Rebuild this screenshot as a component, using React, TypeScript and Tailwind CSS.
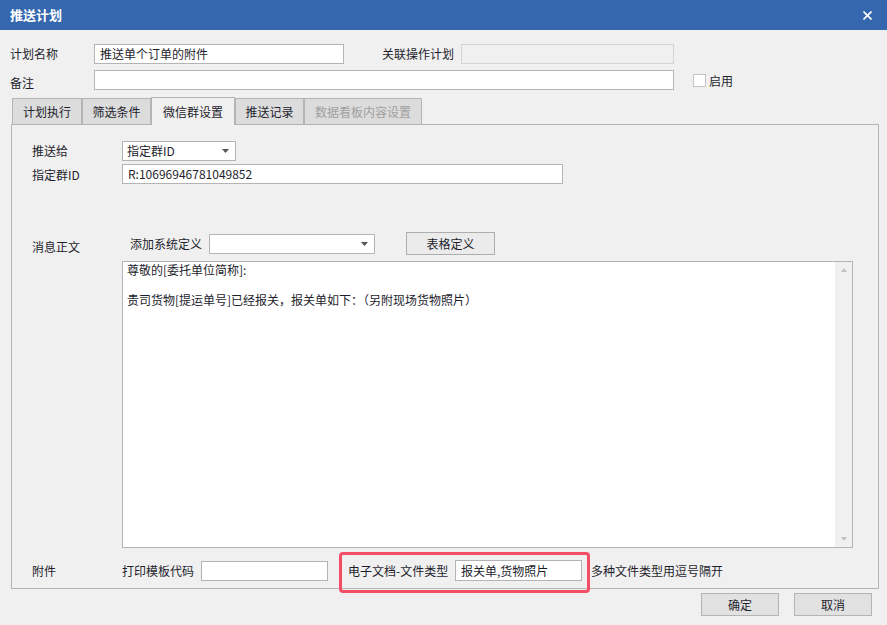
import React, { useState } from "react";

const font = "font-['Microsoft_YaHei','Noto_Sans_CJK_SC',sans-serif]";

function Arrow() {
  return (
    <svg width="7" height="4" viewBox="0 0 7 4">
      <path d="M0 0h7L3.5 4z" fill="#555" />
    </svg>
  );
}

function Select({ value, w }: { value: string; w: string }) {
  return (
    <div className={`flex h-[20px] items-center justify-between border border-[#b4b4b4] bg-white pl-[4px] pr-[6px] ${w}`}>
      <span className="leading-[18px]">{value}</span>
      <Arrow />
    </div>
  );
}

function Input({ value, w, h = "h-[20px]", disabled }: { value?: string; w: string; h?: string; disabled?: boolean }) {
  return (
    <div
      className={`flex items-center border pl-[5px] leading-[18px] ${w} ${h} ` +
        (disabled ? "border-[#d4d4d4] bg-[#f0f0f0]" : "border-[#b4b4b4] bg-white")}
    >
      {value}
    </div>
  );
}

export default function App() {
  const [tab, setTab] = useState("微信群设置");
  const [enabled, setEnabled] = useState(false);

  const tabs = [
    { name: "计划执行", w: "w-[70px]" },
    { name: "筛选条件", w: "w-[69px]" },
    { name: "微信群设置", w: "w-[84px]" },
    { name: "推送记录", w: "w-[69px]" },
    { name: "数据看板内容设置", w: "w-[118px]", disabled: true },
  ];

  return (
    <div className={`h-[625px] w-[887px] overflow-hidden bg-[#f0f0f0] text-[12px] text-[#1e1e2d] ${font}`}>
      {/* title bar */}
      <div className="flex h-[30px] items-center justify-between bg-[#3467ae] pl-[10px] pr-[15px]">
        <span className="text-[13px] font-bold text-white">推送计划</span>
        <svg width="9" height="9" viewBox="0 0 9 9">
          <path d="M0.5 0.5l8 8M8.5 0.5l-8 8" stroke="#fff" strokeWidth="1.6" />
        </svg>
      </div>

      <div className="px-[10px]">
        <div className="mt-[14px] flex h-[19px] items-center">
          <span className="w-[84px]">计划名称</span>
          <Input value="推送单个订单的附件" w="w-[250px]" h="h-[20px]" />
          <span className="ml-[38px] w-[79px]">关联操作计划</span>
          <Input w="w-[213px]" h="h-[20px]" disabled />
        </div>

        <div className="mt-[7px] flex h-[20px] items-center">
          <span className="mt-[6px] w-[84px]">备注</span>
          <Input w="w-[580px]" />
          <button
            onClick={() => setEnabled(!enabled)}
            className="ml-[19px] h-[13px] w-[13px] border border-[#c4c4c4] bg-white"
          />
          <span className="ml-[3px] mt-[2px]">启用</span>
        </div>

        {/* tab strip */}
        <div className="mt-[7px] ml-[2px] flex h-[27px] items-end">
          {tabs.map((t) => (
            <button
              key={t.name}
              onClick={() => !t.disabled && setTab(t.name)}
              className={`flex items-center justify-center border border-b-0 border-[#b4b4b4] ${t.w} ` +
                (tab === t.name
                  ? "relative z-10 -mb-px h-[28px] bg-[#f0f0f0]"
                  : "h-[26px] bg-[#dcdcdc]") +
                (t.disabled ? " text-[#a0a0a0]" : "")}
            >
              {t.name}
            </button>
          ))}
        </div>

        {/* tab panel */}
        <div className="ml-[1px] h-[465px] w-[868px] border border-[#b4b4b4] pl-[20px] pt-[16px]">
          <div className="flex h-[19px] items-center">
            <span className="w-[90px]">推送给</span>
            <Select value="指定群ID" w="w-[114px]" />
          </div>
          <div className="mt-[4px] flex h-[20px] items-center">
            <span className="w-[90px] pt-[2px]">指定群ID</span>
            <Input value="R:10696946781049852" w="w-[441px]" />
          </div>

          <div className="mt-[48px] flex h-[23px] items-center">
            <span className="mt-[6px] w-[90px]">消息正文</span>
            <span className="ml-[8px] w-[79px]">添加系统定义</span>
            <Select value="" w="w-[166px]" />
            <button className="ml-[31px] h-[23px] w-[89px] border border-[#adadad] bg-[#ebebeb]">表格定义</button>
          </div>

          <div className="ml-[90px] mt-[6px] flex h-[287px] w-[731px] border border-[#b4b4b4] bg-white">
            <div className="flex-1 px-[4px] leading-[15px]">
              <div>尊敬的[委托单位简称]:</div>
              <div>&nbsp;</div>
              <div>贵司货物[提运单号]已经报关，报关单如下：（另附现场货物照片）</div>
            </div>
            <div className="flex w-[17px] flex-col items-center justify-between bg-[#f0f0f0] py-[6px]">
              <svg width="6" height="4" viewBox="0 0 6 4"><path d="M0 4h6L3 0z" fill="#c2c2c2" /></svg>
              <svg width="6" height="4" viewBox="0 0 6 4"><path d="M0 0h6L3 4z" fill="#c2c2c2" /></svg>
            </div>
          </div>

          <div className="mt-[12px] flex h-[21px] items-center">
            <span className="w-[90px]">附件</span>
            <span className="w-[79px]">打印模板代码</span>
            <Input w="w-[127px]" />
            <div className="relative ml-[20px] flex items-center">
              <span className="w-[107px]">电子文档-文件类型</span>
              <Input value="报关单,货物照片" w="w-[127px]" h="h-[21px]" />
              <div className="pointer-events-none absolute -left-[9px] -top-[8px] h-[41px] w-[251px] rounded-[4px] border-[3px] border-[#f44d67]" />
            </div>
            <span className="ml-[9px]">多种文件类型用逗号隔开</span>
          </div>
        </div>

        <div className="mt-[4px] mr-[5px] flex justify-end gap-[15px]">
          <button className="h-[23px] w-[78px] border border-[#b4b4b4] bg-[#e1e1e1]">确定</button>
          <button className="h-[23px] w-[78px] border border-[#b4b4b4] bg-[#e1e1e1]">取消</button>
        </div>
      </div>
    </div>
  );
}
